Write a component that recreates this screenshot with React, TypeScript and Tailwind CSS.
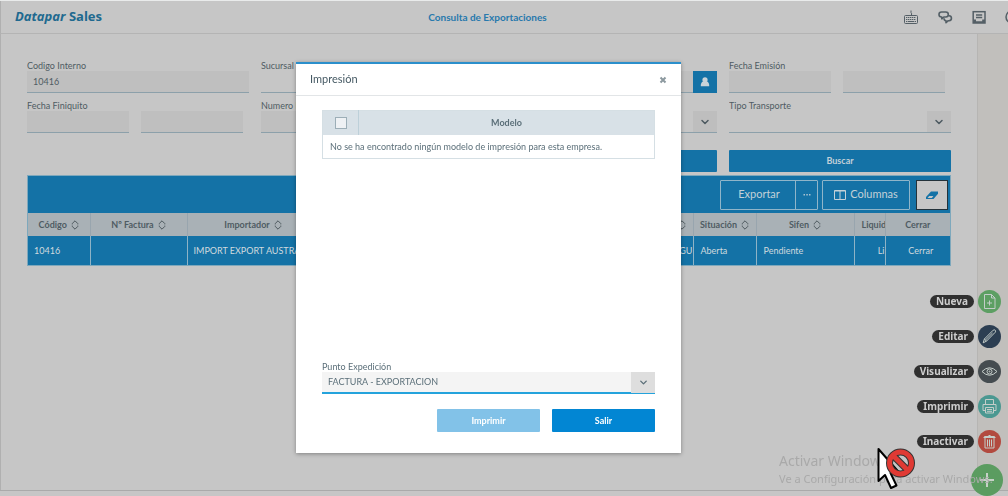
import { ReactNode, useState } from "react";
import { ChevronDown } from "lucide-react";

const columnas = [
  { titulo: "Código", valor: "10416", width: "w-[62px]", sort: true, align: "text-left pl-1.5" },
  { titulo: "Nº Factura", valor: "", width: "w-[97px]", sort: true, align: "text-left pl-1.5" },
  { titulo: "Importador", valor: "IMPORT EXPORT AUSTRAL", width: "w-[132px]", sort: true, align: "text-left pl-1.5" },
  { titulo: "", valor: "EGU", width: "", sort: true, align: "text-right" },
  { titulo: "Situación", valor: "Aberta", width: "w-[63px]", sort: true, align: "text-left pl-[7px]" },
  { titulo: "Sifen", valor: "Pendiente", width: "w-[98px]", sort: true, align: "text-left pl-[7px]" },
  { titulo: "Liquid", valor: "Li", width: "w-[31px]", sort: false, align: "text-right" },
  { titulo: "Cerrar", valor: "Cerrar", width: "w-[65px]", sort: false, align: "text-center pl-1.5" },
];

function SortIcon() {
  return (
    <svg viewBox="0 0 8 10" className="w-2 h-2.5 shrink-0" fill="none" stroke="#4d585e" strokeWidth="1">
      <path d="M1.2 4.4V3.6L4 .8l2.8 2.8v.8M1.2 5.6v.8L4 9.2l2.8-2.8v-.8" />
    </svg>
  );
}

function Campo({ id, label, children }: { id: string; label: string; children: ReactNode }) {
  return (
    <div className="min-w-0">
      <label htmlFor={id} className="block h-3 leading-[14px] text-[9px] whitespace-nowrap overflow-hidden">
        {label}
      </label>
      {children}
    </div>
  );
}

const inputClass = "block h-[22px] w-full min-w-0 bg-[#bfbfbf] border-b border-[#8ca0aa] px-1.5 text-[9px] outline-none";

function RangoFechas({ id }: { id: string }) {
  return (
    <div className="flex gap-3 pr-1.5">
      <input id={id} className={inputClass} />
      <input aria-label="Fecha hasta" className={inputClass} />
    </div>
  );
}

function Lista({ id }: { id: string }) {
  return (
    <div className="grid">
      <select
        id={id}
        className="col-start-1 row-start-1 h-[22px] w-full appearance-none border-b border-[#8ca0aa] px-1.5 text-[9px] outline-none"
      >
        <option></option>
      </select>
      <span className="col-start-1 row-start-1 justify-self-end w-6 h-[21px] bg-[#bebebe] flex items-center justify-center pointer-events-none">
        <ChevronDown size={12} strokeWidth={3} color="#4d5a61" />
      </span>
    </div>
  );
}

function HeaderIcons() {
  return (
    <div className="flex justify-end items-center gap-[18px] text-[#545f66]">
      <button aria-label="Teclado">
        <svg viewBox="0 0 16 16" className="size-4" fill="none" stroke="currentColor" strokeWidth="1">
          <rect x="1.5" y="6.5" width="13" height="8" rx="1" />
          <path d="M8.5 6.5V4.200L8 3.500V1.500" />
          <path d="M3 8.500h10M3 10.500h10" strokeDasharray="1.400 .6" />
          <path d="M3 12.500h1.400M5 12.500h6M11.600 12.500H13" />
        </svg>
      </button>
      <button aria-label="Mensajes">
        <svg viewBox="0 0 16 16" className="size-4" fill="none" stroke="currentColor" strokeWidth="1.600" strokeLinejoin="round">
          <path d="M4.500 3h4.300a2.500 2.500 0 0 1 0 5H6.800L4.800 9.800V8h-.3a2.500 2.500 0 0 1 0-5z" />
          <path d="M11.500 6.700h.3a2.500 2.500 0 0 1 .3 5h-.8l-2.300 2v-2a2.500 2.500 0 0 1-2-2.500" />
        </svg>
      </button>
      <button aria-label="Bandeja">
        <svg viewBox="0 0 16 16" className="size-4" fill="none" stroke="currentColor" strokeWidth="1.500">
          <rect x="2.200" y="2.700" width="11.800" height="11.300" />
          <path d="M5 6h6.200M5 8.500h6.200" strokeWidth="1.300" />
          <path d="M2.500 10.500H5v1.800h6.200v-1.800H14v3.500H2.500z" fill="currentColor" stroke="none" />
        </svg>
      </button>
      <button aria-label="Ayuda" className="-ml-1 w-[7px] overflow-hidden">
        <svg viewBox="0 0 16 16" className="size-4" fill="none" stroke="currentColor" strokeWidth="1.500">
          <circle cx="11" cy="8" r="6" />
        </svg>
      </button>
    </div>
  );
}

const acciones = [
  {
    label: "Nueva",
    color: "bg-[#5d9f63]",
    icon: <path d="M6.500 4.500h7l3.500 3.500v10.500h-10.500zM13.500 4.500V8H17M11.500 10.500v5M9 13h5" />,
  },
  {
    label: "Editar",
    color: "bg-[#2c3e52]",
    icon: <path d="M5.200 17.800l1.200-3.800 8.800-8.800q1.200-.8 2 0 .9.900 0 2.100l-8.700 8.800zM7.300 15.200l7.200-7.200M6.400 14l2.100 2.100" />,
  },
  {
    label: "Visualizar",
    color: "bg-[#454c50]",
    icon: (
      <>
        <path d="M4 11.500Q11.500 4 19 11.500Q11.500 19 4 11.500z" />
        <circle cx="11.500" cy="11.500" r="2.500" />
        <circle cx="11.500" cy="11.500" r=".5" />
      </>
    ),
  },
  {
    label: "Imprimir",
    color: "bg-[#4b9891]",
    icon: <path d="M7.500 9.500v-5h8v5M7.500 15.500H5v-6h13v6h-2.500M7.500 12.500h8v5.500h-8zM9 14.500h5M9 16.300h5" />,
  },
  {
    label: "Inactivar",
    color: "bg-[#b24a3f]",
    icon: <path d="M5.500 7.500h12M6.500 7.500v-1h10v1M10.500 5.500h2M7 7.500v10.500h9V7.500M9.500 9.500v7M11.500 9.500v7M13.500 9.500v7" />,
  },
];

function MenuAcciones() {
  return (
    <nav className="fixed right-0 bottom-0 flex flex-col items-end gap-3">
      {acciones.map((a) => (
        <button key={a.label} className="flex items-center gap-1 pr-[7px]">
          <span className="h-[13px] rounded-full bg-[#303030] px-1.5 font-['Noto_Sans'] text-[10px] leading-[13px] font-bold text-[#cdcdcd]">
            {a.label}
          </span>
          <span className={`size-[23px] rounded-full ${a.color}`}>
            <svg viewBox="0 0 23 23" className="size-full" fill="none" stroke="#c4cdc9" strokeWidth="1">
              {a.icon}
            </svg>
          </span>
        </button>
      ))}
      <button aria-label="Acciones" className="-mt-px mr-[5px] size-8 rounded-full bg-[#5b9c60]">
        <svg viewBox="0 0 32 32" className="size-8" stroke="#c6d2c7" strokeWidth="2">
          <path d="M16 9v14M9 16h14" />
        </svg>
      </button>
    </nav>
  );
}

function ModalImpresion() {
  const [punto, setPunto] = useState("FACTURA - EXPORTACION");

  return (
    <div className="fixed inset-0 flex items-start justify-center pt-[62px] pr-[31px] pointer-events-none">
      <section
        role="dialog"
        aria-labelledby="modal-titulo"
        className="w-[385px] bg-white border-t-2 border-[#2b8fcb] shadow-[0_1px_4px_rgba(0,0,0,0.35)] text-[#5b6f79] pointer-events-auto"
      >
        <div className="h-8 flex items-center justify-between px-3.5 border-b border-[#e2e5e7]">
          <h2 id="modal-titulo" className="text-[11px] text-[#465a64]">Impresión</h2>
          <button aria-label="Cerrar">
            <svg viewBox="0 0 8 8" className="size-2" stroke="#8c999f" strokeWidth="2">
              <path d="M1.500 1.500l5 5M6.500 1.500l-5 5" />
            </svg>
          </button>
        </div>

        <div className="px-[26px] pt-3.5 pb-[21px]">
          <table className="w-full table-fixed border-collapse border border-[#d5dfe4] text-[9px]">
            <thead>
              <tr className="h-6 bg-[#d8e1e7]">
                <th className="w-9 border-r border-[#bdd0d9]">
                  <input
                    type="checkbox"
                    aria-label="Seleccionar todos"
                    className="block mx-auto size-3 appearance-none border border-[#9caeb7] bg-[#eef1f4]"
                  />
                </th>
                <th className="font-bold">Modelo</th>
              </tr>
            </thead>
            <tbody>
              <tr className="h-6">
                <td colSpan={2} className="px-[7px]">
                  No se ha encontrado ningún modelo de impresión para esta empresa.
                </td>
              </tr>
            </tbody>
          </table>

          <div className="mt-[201px]">
            <label htmlFor="punto" className="block h-3 leading-[14px] text-[9px]">Punto Expedición</label>
            <div className="grid">
              <select
                id="punto"
                value={punto}
                onChange={(e) => setPunto(e.target.value)}
                className="col-start-1 row-start-1 h-[22px] w-full appearance-none bg-[#f4f4f4] border-b-2 border-[#24a3dc] px-1.5 text-[9px] outline-none"
              >
                <option>FACTURA - EXPORTACION</option>
              </select>
              <span className="col-start-1 row-start-1 justify-self-end w-6 h-[21px] bg-[#dedede] flex items-center justify-center pointer-events-none">
                <ChevronDown size={11} strokeWidth={3} />
              </span>
            </div>
          </div>

          <div className="mt-[15px] flex justify-end gap-3 text-[9px] font-bold text-white">
            <button disabled className="w-[103px] h-[23px] rounded-[1px] bg-[#82c2e8]">Imprimir</button>
            <button className="w-[103px] h-[23px] rounded-[1px] bg-[#0286d3]">Salir</button>
          </div>
        </div>
      </section>
    </div>
  );
}

export default function App() {
  return (
    <div className="min-h-screen flex flex-col overflow-hidden bg-[#c6c6c6] border-t border-t-[#e9ebeb] font-[Lato,sans-serif] text-[#4f5c63]">
      <header className="h-[33px] shrink-0 grid grid-cols-3 items-center border-b border-b-[#b4b4b4] border-l border-l-[#b0b0b0] pl-3.5">
        <div className="font-['Open_Sans'] text-[13px] font-bold text-[#20698f]">
          <i>Datapar</i> Sales
        </div>
        <h1 className="text-center pr-12 text-[10px] font-bold text-[#2879ad]">Consulta de Exportaciones</h1>
        <HeaderIcons />
      </header>

      <div className="flex flex-1">
        <main className="flex-1 min-w-0 px-[26px] pt-[25px] border-l border-[#b0b0b0]">
          <form className="grid grid-cols-4 gap-x-3 gap-y-1.5">
            <Campo id="codigo" label="Codigo Interno">
              <input id="codigo" defaultValue="10416" className={inputClass} />
            </Campo>
            <Campo id="sucursal" label="Sucursal">
              <Lista id="sucursal" />
            </Campo>
            <Campo id="cliente" label="">
              <div className="flex">
                <input id="cliente" aria-label="Importador" className={inputClass} />
                <button type="button" aria-label="Buscar importador" className="w-6 shrink-0 bg-[#1472a6] flex items-center justify-center">
                  <svg viewBox="0 0 10 12" className="h-3 w-2.5" fill="#c9d3d8">
                    <circle cx="5" cy="3.800" r="2.600" />
                    <path d="M.8 10.200C.6 7.800 1.500 6 3 5.500h4c1.500.5 2.400 2.300 2.200 4.700z" />
                  </svg>
                </button>
              </div>
            </Campo>
            <Campo id="emision" label="Fecha Emisión">
              <RangoFechas id="emision" />
            </Campo>
            <Campo id="finiquito" label="Fecha Finiquito">
              <RangoFechas id="finiquito" />
            </Campo>
            <Campo id="numero" label="Numero Factura">
              <input id="numero" className={inputClass} />
            </Campo>
            <Campo id="situacion" label="">
              <Lista id="situacion" />
            </Campo>
            <Campo id="transporte" label="Tipo Transporte">
              <Lista id="transporte" />
            </Campo>
            <button type="button" aria-label="Limpiar" className="col-start-3 mt-[11px] h-[22px] rounded-[1px] bg-[#1472a6]"></button>
            <button type="button" className="mt-[11px] h-[22px] rounded-[1px] bg-[#1472a6] text-[9px] font-bold text-[#c2d0d8]">
              Buscar
            </button>
          </form>

          <div className="mt-[3px] border border-[#7ea8bc]">
            <div className="h-[37px] bg-[#1472a6] flex items-center justify-end pr-0.5 text-[11px] text-[#c3d1d8]">
              <div className="flex h-[30px] border border-[#8fb5c9] rounded-[1px]">
                <button className="w-[74px] pl-0.5">Exportar</button>
                <button aria-label="Más opciones" className="w-[22px] border-l border-[#8fb5c9] flex items-center justify-center">
                  <svg viewBox="0 0 8 2" className="w-2 h-0.5" fill="#a9c3d1">
                    <path d="M.5 0h1.500v1.500H.5zM3.300 0h1.500v1.500H3.300zM6 0h1.500v1.500H6z" />
                  </svg>
                </button>
              </div>
              <button className="ml-1 w-[88px] h-[30px] border border-[#8fb5c9] rounded-[1px] flex items-center justify-center gap-1">
                <svg viewBox="0 0 12 10" className="w-3 h-2.5" fill="none" stroke="currentColor">
                  <path d="M.5.500h11v9H.5zM6 .5v9M.5 1h11" />
                </svg>
                Columnas
              </button>
              <button aria-label="Limpiar filtros" className="ml-1.5 w-8 h-[30px] bg-[#c6c6c6] border border-[#23323a] flex items-center justify-center">
                <svg viewBox="0 0 14 10" className="w-3.5 h-2.5">
                  <path d="M6 1.500h7v2.200L8.500 9H1V7z" fill="#1472a6" />
                  <path d="M2.600 7.900l1.600-2h4.200l-1.600 2z" fill="#c6c6c6" />
                </svg>
              </button>
            </div>

            <table className="w-full table-fixed border-collapse text-[9px]">
              <thead>
                <tr className="h-[23px] bg-[#a9b1b6]">
                  {columnas.map((c, idx) => (
                    <th key={idx} className={`${c.width} border-r border-[#98a5ae] last:border-r-0 font-bold overflow-hidden whitespace-nowrap`}>
                      <span
                        className={
                          !c.titulo
                            ? "flex justify-end pr-[7px]"
                            : c.titulo === "Liquid"
                              ? "flex pl-[7px]"
                              : "flex items-center justify-center gap-1"
                        }
                      >
                        {c.titulo}
                        {c.sort && <SortIcon />}
                      </span>
                    </th>
                  ))}
                </tr>
              </thead>
              <tbody>
                <tr className="h-[29px] bg-[#1472a6] text-[#d0dade]">
                  {columnas.map((c, idx) => (
                    <td
                      key={idx}
                      className={`${c.align} border-r border-[#8eb3c6] last:border-r-0 overflow-hidden whitespace-nowrap`}
                    >
                      {c.valor}
                    </td>
                  ))}
                </tr>
              </tbody>
            </table>
          </div>
        </main>
        <aside className="w-[31px] bg-[#c1bfbc] border-l border-[#b6b5b3]"></aside>
      </div>
      <footer className="h-1.5 border-t border-[#aaaaaa]"></footer>

      <MenuAcciones />

      {/* Marca de agua del sistema */}
      <div className="fixed right-[11px] bottom-2 w-[218px] whitespace-nowrap font-['Noto_Sans'] text-[#a9a9a9] pointer-events-none">
        <p className="text-[14px] leading-[18px]">Activar Windows</p>
        <p className="text-[11px] leading-[18px]">Ve a Configuración para activar Windows.</p>
      </div>

      <ModalImpresion />

      {/* Cursor bloqueado */}
      <svg viewBox="0 0 40 44" className="fixed right-[91px] bottom-[5px] w-10 h-11 pointer-events-none">
        <path d="M1.500 2v32l6.500-6 6 13 5.500-2.500-6-12.500h9z" fill="#fff" stroke="#000" strokeWidth="2" strokeLinejoin="round" />
        <circle cx="23.500" cy="16" r="11" fill="none" stroke="#333" strokeWidth="7" />
        <path d="M17 9.500l13 13" stroke="#333" strokeWidth="7" />
        <circle cx="23.500" cy="16" r="11" fill="none" stroke="#e03a34" strokeWidth="5" />
        <path d="M16 8.500l15 15" stroke="#e03a34" strokeWidth="5" />
      </svg>
    </div>
  );
}
